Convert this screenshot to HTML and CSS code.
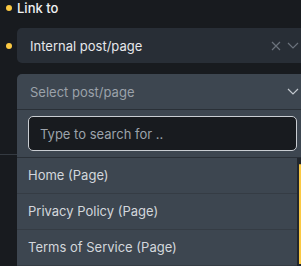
FILE: index.html
```html
<!DOCTYPE html>
<html lang="en">
<head>
    <meta charset="UTF-8">
    <meta name="viewport" content="width=device-width, initial-scale=1.0">
    <title>Link to</title>
    <link rel="stylesheet" href="styles.css">
</head>
<body>
    <div class="control">
        <div class="label-row">
            <span class="dot"></span>
            <span class="label">Link to</span>
        </div>

        <div class="select-row">
            <span class="dot"></span>
            <div class="select">
                <span class="select-value">Internal post/page</span>
                <span class="select-icons">
                    <svg class="icon-clear" width="10" height="10" viewBox="0 0 10 10">
                        <path d="M1 1 L9 9 M9 1 L1 9" stroke="currentColor" stroke-width="1.2" fill="none"/>
                    </svg>
                    <svg class="icon-chevron" width="12" height="7" viewBox="0 0 12 7">
                        <path d="M1 1 L6 6 L11 1" stroke="currentColor" stroke-width="1.2" fill="none"/>
                    </svg>
                </span>
            </div>
        </div>

        <div class="divider"></div>

        <div class="dropdown">
            <div class="dropdown-head">
                <span class="placeholder">Select post/page</span>
                <svg class="icon-chevron light" width="12" height="7" viewBox="0 0 12 7">
                    <path d="M1 1 L6 6 L11 1" stroke="currentColor" stroke-width="1.2" fill="none"/>
                </svg>
            </div>
            <div class="dropdown-search">
                <input type="text" class="search" placeholder="Type to search for ..">
            </div>
            <div class="dropdown-body">
                <ul class="options">
                    <li>Home (Page)</li>
                    <li>Privacy Policy (Page)</li>
                    <li>Terms of Service (Page)</li>
                </ul>
                <div class="scroll-track">
                    <div class="scroll-thumb"></div>
                </div>
            </div>
        </div>
    </div>
</body>
</html>
```

FILE: styles.css
```css
html,
body {
    height: 100%;
}

body {
    margin: 0;
    padding: 0;
    background-color: #181b1f;
    font-family: Inter, "Noto Sans", sans-serif;
    font-size: 13px;
    color: #e5e7eb;
    overflow: hidden;
}

.control {
    position: relative;
    height: 100%;
    padding-top: 1px;
    box-sizing: border-box;
}

.dot {
    width: 6px;
    height: 6px;
    border-radius: 50%;
    background-color: #fbc943;
    margin-left: 6px;
    margin-right: 5px;
    flex-shrink: 0;
}

.label-row {
    display: flex;
    align-items: center;
    height: 14px;
}

.label {
    font-weight: 500;
    color: #eef0f2;
}

.select-row {
    display: flex;
    align-items: center;
    margin-top: 13px;
}

.select {
    flex: 1;
    display: flex;
    align-items: center;
    justify-content: space-between;
    height: 35px;
    margin-right: -6px;
    padding: 0 8px 0 13px;
    background-color: #282e36;
    border-radius: 5px;
}

.select-icons {
    display: flex;
    align-items: center;
    gap: 6px;
    color: #6b727c;
}

.divider {
    margin-top: 91px;
    height: 1px;
    background-color: #343a41;
}

.dropdown {
    position: absolute;
    top: 74px;
    left: 17px;
    right: 0;
    background-color: #3d4650;
    border-radius: 5px 0 0 0;
}

.dropdown-head {
    display: flex;
    align-items: center;
    justify-content: space-between;
    height: 35px;
    padding: 0 2px 0 13px;
    border-bottom: 1px solid #2a3037;
}

.placeholder {
    color: #9ba2aa;
}

.icon-chevron.light {
    color: #c3c8ce;
}

.dropdown-search {
    padding: 6px 4px 6px 11px;
    border-bottom: 1px solid #2a3037;
}

.search {
    box-sizing: border-box;
    width: 100%;
    height: 35px;
    padding: 0 11px;
    background-color: #181b1f;
    border: 1px solid #c9cdd2;
    border-radius: 5px;
    font-family: inherit;
    font-size: 13px;
    color: #e5e7eb;
    outline: none;
}

.search::placeholder {
    color: #9ca3ab;
}

.dropdown-body {
    display: flex;
}

.options {
    flex: 1;
    list-style: none;
    margin: 0;
    padding: 0;
}

.options li {
    height: 35px;
    line-height: 35px;
    padding-left: 11px;
    border-bottom: 1px solid #353c44;
    color: #d3d7dc;
}

.scroll-track {
    width: 4px;
    padding-top: 6px;
    background-color: #22272d;
}

.scroll-thumb {
    width: 2px;
    height: 100px;
    margin-left: 2px;
    background-color: #fbc943;
    border-radius: 2px 2px 0 0;
}
```
